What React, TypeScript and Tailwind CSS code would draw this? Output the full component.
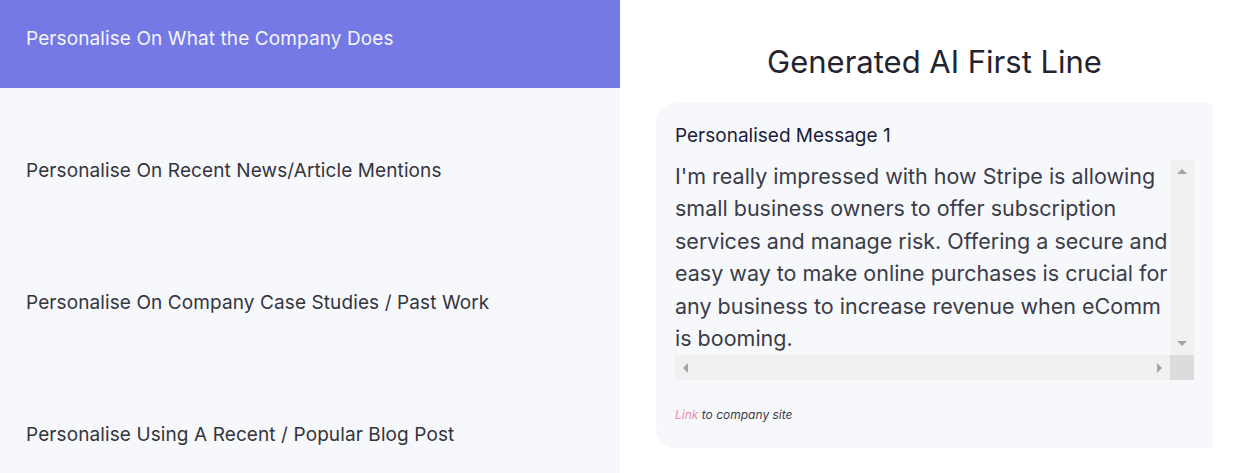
const options = [
  "Personalise On What the Company Does",
  "Personalise On Recent News/Article Mentions",
  "Personalise On Company Case Studies / Past Work",
  "Personalise Using A Recent / Popular Blog Post",
]

const message =
  "I'm really impressed with how Stripe is allowing small business owners to offer subscription services and manage risk. Offering a secure and easy way to make online purchases is crucial for any business to increase revenue when eComm is booming."

export default function App() {
  const active = 0

  return (
    <div className="flex h-[473px] w-[1235px] overflow-hidden bg-white font-['Inter',sans-serif]">
      {/* Options */}
      <div className="flex w-[620px] shrink-0 flex-col gap-[44px] bg-[#f7f8fc]">
        {options.map((label, i) => (
          <div
            key={label}
            className={`h-[88px] shrink-0 px-[26px] pt-[25px] text-[19px] leading-[27px] tracking-[0.1px] ${
              i === active ? "bg-[#7479e6] text-[#f4f4fd]" : "text-[#34353c]"
            }`}
          >
            {label}
          </div>
        ))}
      </div>

      {/* Result */}
      <div className="flex flex-1 flex-col pl-[36px] pr-[22px] pt-[43px]">
        <h2 className="text-center text-[31px] leading-[38px] text-[#23242f]">Generated AI First Line</h2>

        <div className="mt-[22px] flex h-[345px] flex-col rounded-l-[20px] bg-[#f7f8fc] px-[19px] pt-[20px]">
          <p className="text-[19px] leading-[26px] text-[#1b1c3a]">Personalised Message 1</p>

          <div className="mt-[11px] flex flex-col">
            <div className="flex h-[195px]">
              <div className="flex-1 overflow-hidden text-[21.5px] leading-[32.4px] text-[#3a3c48]">{message}</div>
              <div className="flex w-[24px] flex-col items-center justify-between bg-[#f1f1f1] py-[9px]">
                <span className="h-0 w-0 border-x-[5px] border-b-[5px] border-x-transparent border-b-[#a3a3a3]" />
                <span className="h-0 w-0 border-x-[5px] border-t-[5px] border-x-transparent border-t-[#a3a3a3]" />
              </div>
            </div>
            <div className="flex h-[25px]">
              <div className="flex flex-1 items-center justify-between bg-[#f1f1f1] px-[8px]">
                <span className="h-0 w-0 border-y-[5px] border-r-[5px] border-y-transparent border-r-[#a3a3a3]" />
                <span className="h-0 w-0 border-y-[5px] border-l-[5px] border-y-transparent border-l-[#a3a3a3]" />
              </div>
              <div className="w-[24px] bg-[#dcdcdc]" />
            </div>
          </div>

          <p className="mt-[26px] text-[12px] italic text-[#3b3c44]">
            <span className="text-[#eb8aa6]">Link</span> to company site
          </p>
        </div>
      </div>
    </div>
  )
}
